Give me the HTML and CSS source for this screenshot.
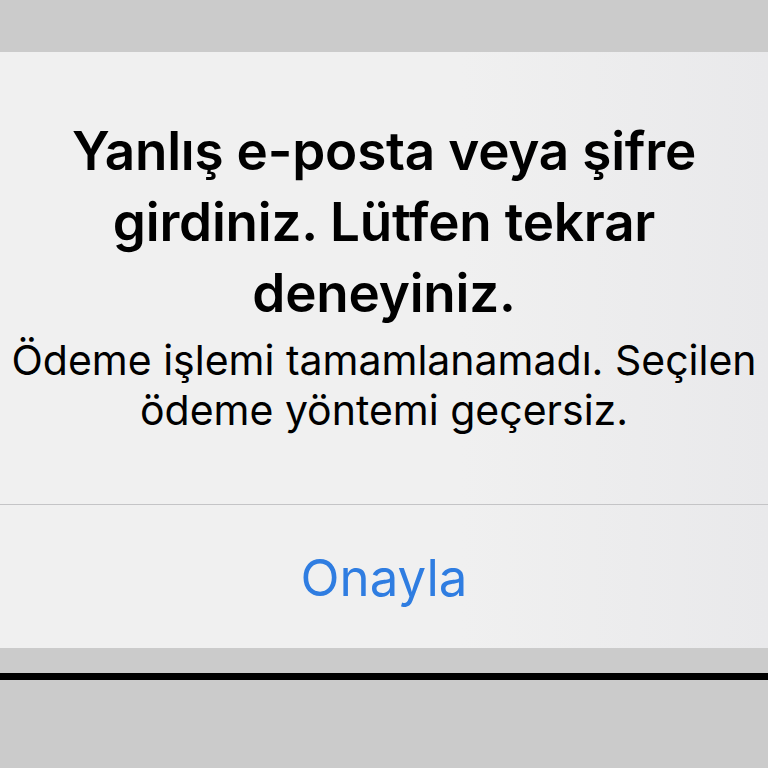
FILE: index.html
```html
<!DOCTYPE html>
<html lang="tr">
<head>
<meta charset="utf-8">
<link rel="stylesheet" href="styles.css">
</head>
<body>
<div class="top"></div>
<div class="alert">
  <div class="content">
    <div class="title">Yanlış e-posta veya şifre girdiniz. Lütfen tekrar deneyiniz.</div>
    <div class="message">Ödeme işlemi tamamlanamadı. Seçilen ödeme yöntemi geçersiz.</div>
  </div>
  <div class="button">Onayla</div>
</div>
<div class="gap"></div>
<div class="rule"></div>
</body>
</html>
```
FILE: styles.css
```css
html, body {
  margin: 0;
  padding: 0;
  background: #cbcbcb;
  width: 768px;
  height: 768px;
  overflow: hidden;
}
.top {
  height: 52px;
}
.alert {
  height: 596px;
  background: linear-gradient(to right, #f0f0f0 0%, #f0f0f0 60%, #e9e9eb 100%);
  display: flex;
  flex-direction: column;
}
.content {
  height: 453px;
  box-sizing: border-box;
  padding-top: 64px;
  border-bottom: 1px solid #c4c4c6;
  text-align: center;
  font-family: Inter, "Noto Sans", sans-serif;
  color: #000;
}
.title {
  font-weight: 600;
  font-size: 53px;
  line-height: 71px;
  padding: 0 40px;
  letter-spacing: -0.2px;
}
.message {
  margin-top: 6px;
  font-size: 41px;
  line-height: 50px;
  font-weight: 400;
  padding: 0;
  margin-left: -10px;
  margin-right: -10px;
}
.button {
  flex: 1;
  display: flex;
  align-items: center;
  justify-content: center;
  font-family: Inter, "Noto Sans", sans-serif;
  font-size: 51px;
  color: #2f7de1;
  padding-top: 2px;
}
.gap {
  height: 25px;
}
.rule {
  height: 7px;
  background: #000;
}
```
